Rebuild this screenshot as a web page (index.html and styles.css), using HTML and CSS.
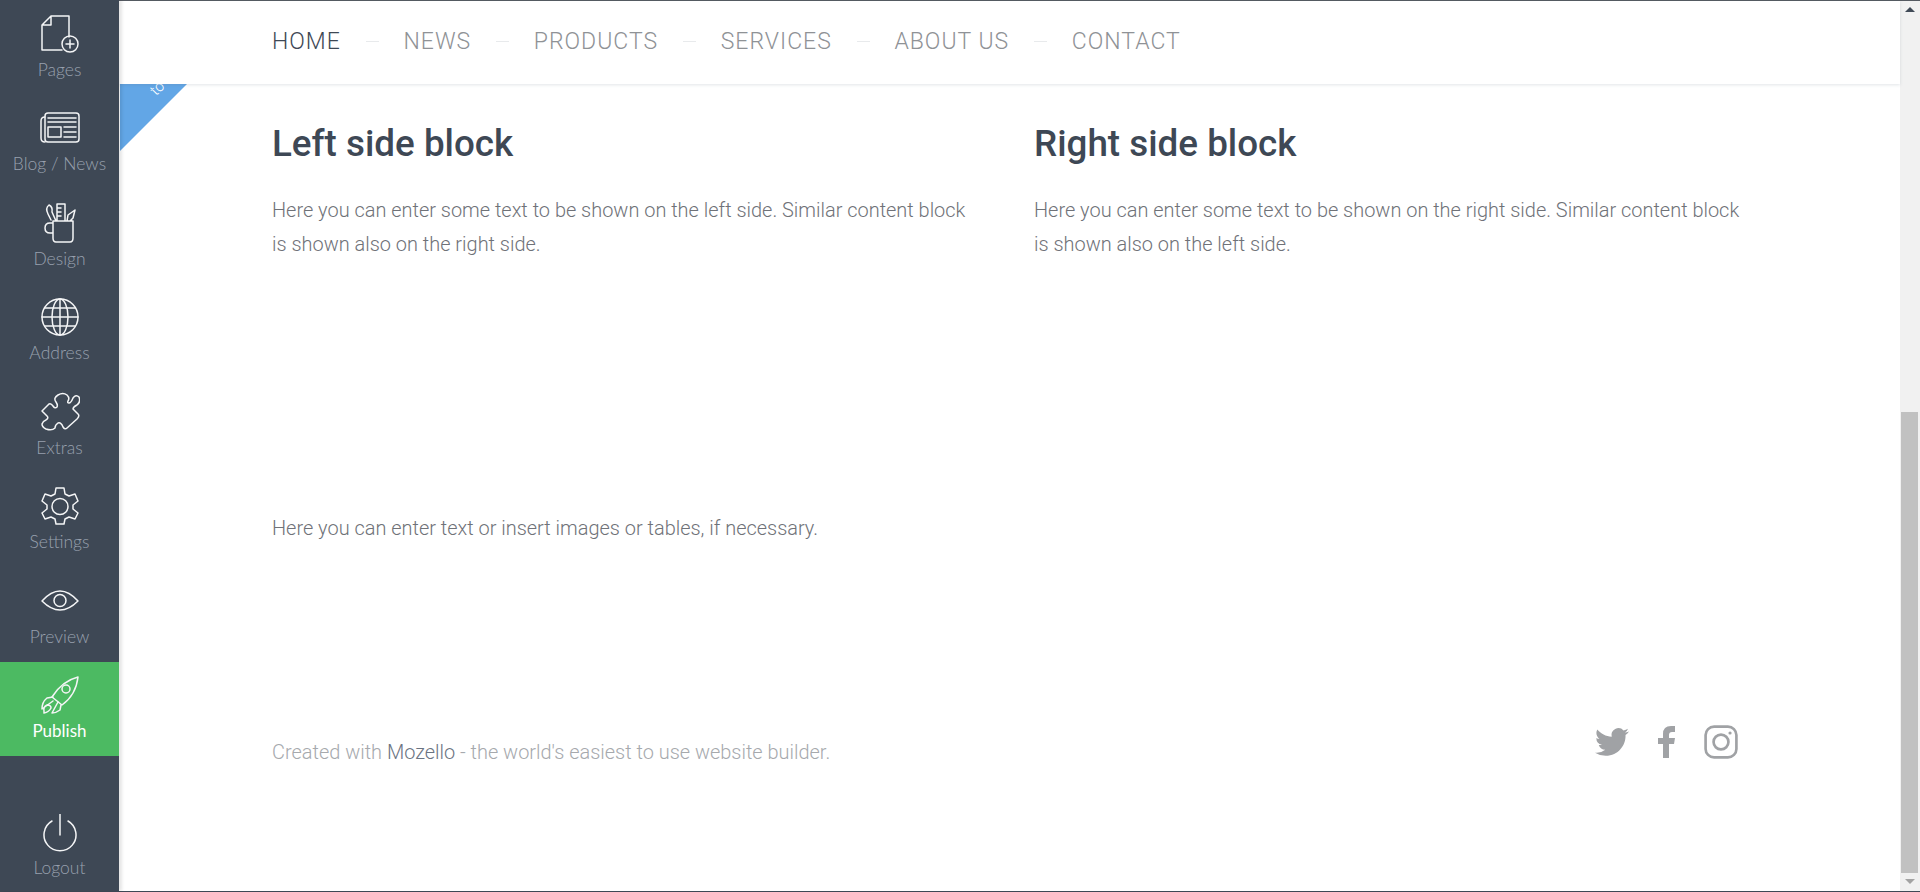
FILE: index.html
```html
<!DOCTYPE html>
<html lang="en">
<head>
<meta charset="utf-8">
<title>Website editor</title>
<link rel="stylesheet" href="styles.css">
</head>
<body>
<div class="frame">
  <nav class="sidebar">
    <a class="tool">
      <svg class="tool-icon" viewBox="0 0 40 40"><path d="M22 36H2V11L11 2H29V23M11 2V11H2"/><circle cx="30" cy="30" r="8"/><path d="M30 26V34M26 30H34"/></svg>
      <span>Pages</span>
    </a>
    <a class="tool">
      <svg class="tool-icon" viewBox="0 0 40 40"><rect x="5" y="5" width="34" height="29" rx="3"/><path d="M5 9Q1 9 1 13V30Q1 34 5 34M8 10H36M8 14H36M24 19H36M24 24H36M24 29H36"/><rect x="8" y="19" width="13" height="10"/></svg>
      <span>Blog / News</span>
    </a>
    <a class="tool">
      <svg class="tool-icon" viewBox="0 0 40 40"><path d="M13 18H33V35Q33 39 30 39H16Q13 39 13 35ZM13 20H10Q5 20 5 25Q5 30 10 30H13M11 17L8 11Q5 5 9 2Q13 4 12 9L16 18M17 18V1H25V18M17 5H21M17 9H21M17 13H21M27 18L28 12L35 7L33 15L30 18"/></svg>
      <span>Design</span>
    </a>
    <a class="tool">
      <svg class="tool-icon" viewBox="0 0 40 40"><circle cx="20" cy="20" r="18"/><ellipse cx="20" cy="20" rx="8" ry="18"/><path d="M20 2V38M2 20H38M5 11H35M5 29H35"/></svg>
      <span>Address</span>
    </a>
    <a class="tool">
      <svg class="tool-icon" viewBox="0 0 40 40"><path d="M2 19L9 12Q11 11 13 14Q15 17 17 15Q18 13 16 10Q13 6 18 3Q23 0 27 3Q30 6 28 9Q27 11 29 11Q31 11 33 6Q36 2 39 5Q41 10 37 13Q33 15 33 17Q35 19 38 22Q40 24 37 27L27 36Q25 38 23 35Q21 30 18 31Q15 33 15 36Q12 39 6 37Q2 35 2 32Q3 29 6 28Q9 26 7 24Z"/></svg>
      <span>Extras</span>
    </a>
    <a class="tool">
      <svg class="tool-icon" viewBox="0 0 40 40"><path d="M16 2H24L25 8L29 10L35 8L38 15L33 19V23L38 27L35 33L29 31L25 33L24 38H16L15 33L11 31L5 33L2 27L7 23V19L2 15L5 8L11 10L15 8Z"/><circle cx="20" cy="20.500" r="8"/></svg>
      <span>Settings</span>
    </a>
    <a class="tool">
      <svg class="tool-icon" viewBox="0 0 40 40"><path d="M2 20Q11 10 20 10Q29 10 38 20Q29 29 20 29Q11 29 2 20Z"/><circle cx="20" cy="19.500" r="6"/></svg>
      <span>Preview</span>
    </a>
    <a class="tool tool-publish">
      <svg class="tool-icon" viewBox="0 0 40 40"><path d="M38 2Q36 20 22 30L12 22Q22 6 38 2Z"/><circle cx="26" cy="14" r="4"/><path d="M13 22L7 23Q2 27 2 34L13 26M21 30L20 35Q16 38 12 38L18 27M4 36Q3 32 7 30Q11 30 11 33Q9 37 4 38Z"/></svg>
      <span>Publish</span>
    </a>
    <a class="tool tool-logout">
      <svg class="tool-icon" viewBox="0 0 40 40"><path d="M12 7A16 16 0 1 0 28 7M20 0V21"/></svg>
      <span>Logout</span>
    </a>
  </nav>

  <div class="page">
    <header class="topbar">
      <a class="menu-link menu-current">HOME</a>
      <i class="menu-dash"></i>
      <a class="menu-link">NEWS</a>
      <i class="menu-dash"></i>
      <a class="menu-link">PRODUCTS</a>
      <i class="menu-dash"></i>
      <a class="menu-link">SERVICES</a>
      <i class="menu-dash"></i>
      <a class="menu-link">ABOUT US</a>
      <i class="menu-dash"></i>
      <a class="menu-link">CONTACT</a>
    </header>

    <div class="ribbon"><span class="ribbon-text">to</span></div>

    <main class="content">
      <div class="columns">
        <section>
          <h2>Left side block</h2>
          <p>Here you can enter some text to be shown on the left side. Similar content block is shown also on the right side.</p>
        </section>
        <section>
          <h2>Right side block</h2>
          <p>Here you can enter some text to be shown on the right side. Similar content block is shown also on the left side.</p>
        </section>
      </div>
      <p class="extra">Here you can enter text or insert images or tables, if necessary.</p>
      <footer class="footer">
        <p class="credit">Created with <a>Mozello</a> - the world's easiest to use website builder.</p>
        <div class="social">
          <svg class="twitter" viewBox="0 0 24 24"><path d="M23.950 4.570a10 10 0 0 1-2.820.770 4.960 4.960 0 0 0 2.160-2.720c-.950.550-2 .950-3.130 1.190a4.920 4.920 0 0 0-8.380 4.480C7.690 8.100 4.070 6.130 1.640 3.160a4.820 4.820 0 0 0-.660 2.470c0 1.710.870 3.210 2.190 4.100a4.900 4.900 0 0 1-2.230-.620v.060a4.920 4.920 0 0 0 3.950 4.830 5 5 0 0 1-2.210.080 4.940 4.940 0 0 0 4.600 3.420A9.870 9.870 0 0 1 0 19.540a14 14 0 0 0 7.560 2.210c9.050 0 14-7.500 14-13.980 0-.210 0-.420-.020-.630A9.940 9.940 0 0 0 24 4.590z"/></svg>
          <svg class="facebook" viewBox="0 0 17 32"><path d="M5 32V18H0V12H5V8Q5 0 13 0H17V6H14Q11 6 11 9V12H17L16 18H11V32Z"/></svg>
          <svg class="instagram" viewBox="0 0 32 32"><rect x="1.500" y="1.500" width="29" height="29" rx="8"/><circle cx="16" cy="16" r="7"/><circle class="dot" cx="24.500" cy="7.500" r="1.500"/></svg>
        </div>
      </footer>
    </main>
  </div>

  <div class="scrollbar">
    <span class="arrow arrow-up"></span>
    <div class="track"><div class="thumb"></div></div>
    <span class="arrow arrow-down"></span>
  </div>
</div>
</body>
</html>
```

FILE: styles.css
```css
* { box-sizing: border-box; }
html, body { margin: 0; height: 100%; overflow: hidden; }
body { font-family: Roboto, "Liberation Sans", sans-serif; background: #fff; }

.frame {
  display: flex;
  height: 892px;
  border-top: 1px solid #555a61;
  border-bottom: 1px solid #3e4855;
}

.sidebar {
  position: relative;
  z-index: 3;
  display: flex;
  flex-direction: column;
  flex: 0 0 119px;
  margin-top: -1px;
  padding-top: 1px;
  background: #3e4855;
  box-shadow: 3px 0 3px rgba(0, 0, 0, .1);
}
.tool {
  display: flex;
  flex-direction: column;
  align-items: center;
  height: 94.430px;
  padding-top: 13px;
  font-family: Lato, sans-serif;
  font-weight: 300;
  font-size: 17.500px;
  line-height: 20px;
  color: #98a0ae;
}
.tool span { margin-top: 6px; }
.tool-icon {
  display: block;
  width: 40px;
  height: 40px;
  fill: none;
  stroke: #f4f5f6;
  stroke-width: 1.500;
  stroke-linejoin: round;
  stroke-linecap: round;
}
.tool-publish { background: #4cba62; color: #fff; font-weight: 400; font-size: 17px; }
.tool-logout { margin-top: auto; height: auto; padding: 0 0 13px; }
.tool-logout span { margin-top: 4px; }

.page { position: relative; flex: 1; min-width: 0; display: flex; flex-direction: column; }

.topbar {
  position: relative;
  z-index: 2;
  display: flex;
  align-items: center;
  flex: 0 0 83px;
  padding: 0 0 3px 153px;
  background: #fff;
  box-shadow: 0 1px 3px rgba(90, 110, 130, .18);
}
.menu-link {
  font-weight: 300;
  font-size: 23px;
  letter-spacing: 1px;
  color: #8f9296;
}
.menu-current { color: #3e4855; }
.menu-dash {
  width: 13px;
  height: 1px;
  margin: 0 24.800px;
  background: #e8eaec;
}

.ribbon {
  position: absolute;
  z-index: 1;
  top: 83px;
  left: 1px;
  width: 67px;
  height: 67px;
  background: #62a6e6;
  clip-path: polygon(0 0, 100% 0, 0 100%);
}
.ribbon-text {
  position: absolute;
  top: -3px;
  left: 31px;
  font-size: 15px;
  line-height: 15px;
  font-weight: 300;
  color: #fff;
  transform: rotate(-45deg);
}

.content { flex: 1; padding: 38px 0 0 153px; color: #6f7278; font-weight: 300; }
.columns { display: grid; grid-template-columns: 710px 710px; gap: 52px; }
h2 { margin: 0; font-size: 36.800px; line-height: 44px; font-weight: 500; color: #3e4855; }
p { margin: 0; font-size: 19.950px; line-height: 34px; }
h2 + p { margin-top: 27px; }
.extra { margin-top: 250px; }

.footer { display: flex; justify-content: space-between; align-items: flex-start; width: 1466px; margin-top: 188px; }
.credit { color: #a6a9ad; margin-top: 2px; }
.credit a { color: #6b7482; }
.social { display: flex; align-items: center; margin-top: -8px; }
.social svg { display: block; fill: #a0a2a5; }
.twitter { width: 34px; height: 34px; }
.facebook { width: 17px; height: 32px; margin-left: 29px; }
.instagram { width: 34px; height: 34px; margin-left: 29px; fill: none !important; stroke: #a0a2a5; stroke-width: 2.500; }
.instagram .dot { fill: #a0a2a5; stroke: none; }

.scrollbar {
  display: flex;
  flex-direction: column;
  align-items: center;
  flex: 0 0 20px;
  background: #f1f1f1;
}
.track { flex: 1; width: 100%; padding: 0 2px 0 1px; display: flex; align-items: flex-end; }
.thumb { width: 17px; height: 461px; background: #c1c1c1; }
.arrow { flex: 0 0 18px; width: 0; height: 18px; }
.arrow-up { border-left: 5px solid transparent; border-right: 5px solid transparent; border-bottom: 5px solid #404a57; margin-top: 6px; height: 5px; flex-basis: 5px; margin-bottom: 7px; }
.arrow-down { border-left: 5px solid transparent; border-right: 5px solid transparent; border-top: 5px solid #a3a3a3; margin-top: 6px; height: 5px; flex-basis: 5px; margin-bottom: 7px; }
```
